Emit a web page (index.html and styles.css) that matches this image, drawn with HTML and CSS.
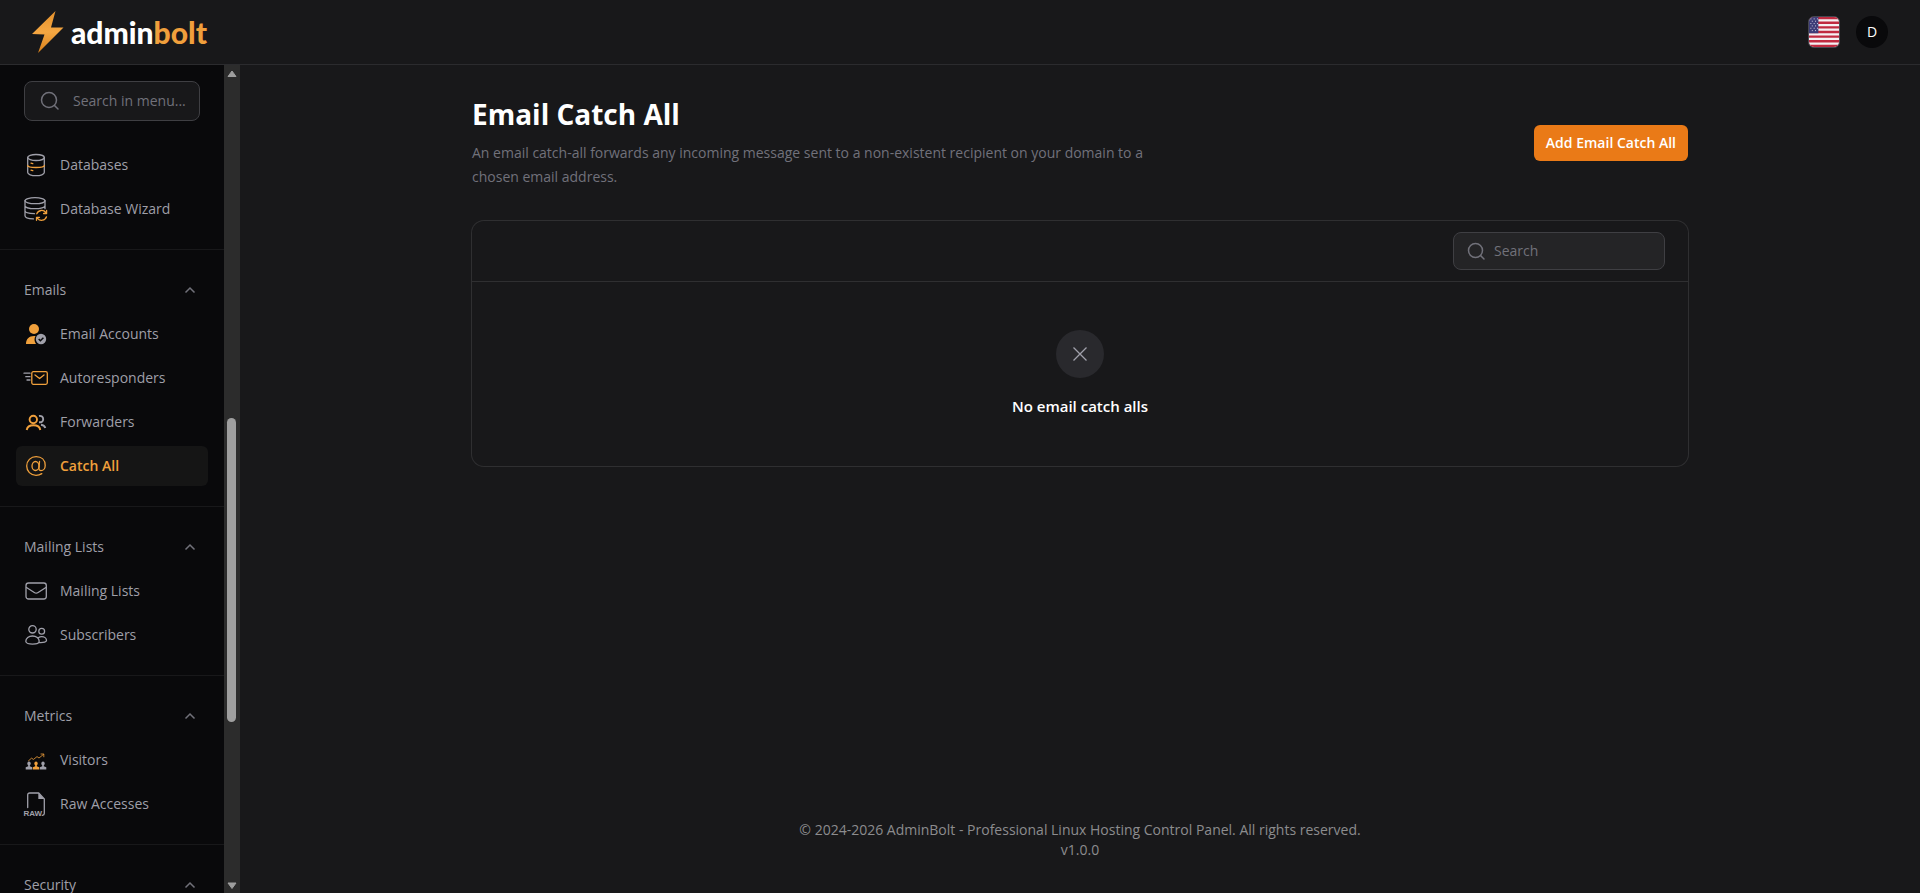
FILE: index.html
```html
<!DOCTYPE html>
<html lang="en">
<head>
<meta charset="utf-8">
<meta name="viewport" content="width=device-width, initial-scale=1">
<title>Email Catch All - AdminBolt</title>
<link rel="stylesheet" href="styles.css">
</head>
<body>
<header class="topbar">
  <a class="brand" href="#" aria-label="adminbolt">
    <svg class="brand-mark" viewBox="0 0 32 42" aria-hidden="true">
      <defs><linearGradient id="bolt" x1="0" y1="0" x2="0" y2="1"><stop offset="0" stop-color="#e5912c"/><stop offset=".5" stop-color="#f5a742"/><stop offset="1" stop-color="#d9801a"/></linearGradient></defs>
      <path fill="url(#bolt)" d="M23.5 0 0 23l12.500.5L6 42l25.500-25.500H19z"/>
    </svg>
    <span class="brand-name">admin<span class="brand-accent">bolt</span></span>
  </a>
  <div class="topbar-actions">
    <button class="flag" type="button" aria-label="Language: English">
      <svg viewBox="0 0 32 32" aria-hidden="true">
        <path fill="#f4f1f3" d="M0 0h32v32H0z"/>
        <path stroke="#c02a40" stroke-width="2.500" d="M0 1.250h32M0 6.150h32M0 11.100h32M0 16h32M0 20.900h32M0 25.850h32M0 30.750h32"/>
        <path fill="#3d3d78" d="M0 0h10v17.200H0z"/>
        <path stroke="#dcdcec" stroke-width="1" stroke-dasharray="1 2.500" d="M1.500 2h8M3 4.500h6M1.500 7h8M3 9.500h6M1.500 12h8M3 14.500h6"/>
      </svg>
    </button>
    <button class="avatar" type="button" aria-label="Account">D</button>
  </div>
</header>

<div class="layout">
  <aside class="sidebar">
    <div class="sidebar-content">
      <label class="menu-search">
        <svg class="icon-search" viewBox="0 0 20 20" aria-hidden="true"><circle cx="9" cy="9" r="7.500"/><path d="m14.500 14.500 3.500 3.500"/></svg>
        <input type="text" placeholder="Search in menu..." aria-label="Search in menu">
      </label>
      <nav class="menu" aria-label="Main">
        <section class="group group-first">
          <a class="item" href="#">
            <svg class="icon" viewBox="0 0 24 24" aria-hidden="true"><g class="line"><ellipse cx="12" cy="4.500" rx="8.300" ry="3"/><path d="M3.700 4.500v15c0 1.800 3.700 3.200 8.300 3.200s8.300-1.400 8.300-3.200v-15"/></g><path class="line accent" d="M3.700 12.500c0 1.100 3.700 2 8.300 2s8.300-.900 8.300-2M7 10.200l1.800.400M7 17.200l1.800.400"/></svg>
            Databases
          </a>
          <a class="item" href="#">
            <svg class="icon" viewBox="0 0 24 24" aria-hidden="true"><g class="line"><ellipse cx="11" cy="3.700" rx="10" ry="3"/><path d="M1 3.700v15c0 1.600 3.500 3 8.500 3.200M21 3.700v8M1 8.700c0 1.700 4.500 3 10 3s10-1.300 10-3M1 13.700c0 1.600 4 2.800 9.500 3"/></g><path class="line accent" d="M12.800 16.800a5.200 5.200 0 0 1 9-1.300m.800-2v3h-3M22.500 19.800a5.200 5.200 0 0 1-9 1.500m-1 2v-3h3"/></svg>
            Database Wizard
          </a>
        </section>

        <section class="group">
          <button class="group-title" type="button" aria-expanded="true">Emails
            <svg class="chevron" viewBox="0 0 20 20" aria-hidden="true"><path d="m5.500 12.500 4.500-4.500 4.500 4.500"/></svg>
          </button>
          <a class="item" href="#">
            <svg class="icon" viewBox="0 0 24 24" aria-hidden="true"><circle class="fill accent" cx="10" cy="7" r="5"/><path class="fill accent" d="M2 22c0-5 3-8 8-8h1.500c-1.500 2.500-1.300 5.500.500 8z"/><circle class="fill" cx="17" cy="17" r="5.200"/><path class="cut" d="m14.700 17 1.700 1.700 3-3"/></svg>
            Email Accounts
          </a>
          <a class="item" href="#">
            <svg class="icon" viewBox="0 0 24 24" aria-hidden="true"><path class="line" d="M0 7.200h6M1.800 10.700H6M3 14h3"/><g class="line accent"><rect x="7.800" y="5.700" width="15.500" height="12.600" rx="1.500"/><path d="m11 9 4.600 3.500L20 9"/></g></svg>
            Autoresponders
          </a>
          <a class="item" href="#">
            <svg class="icon" viewBox="0 0 24 24" aria-hidden="true"><g class="line bold accent"><circle cx="9.300" cy="9.500" r="3.700"/><path d="M2.700 20c.500-3 3.200-4.700 6.800-4.700s6.300 1.700 6.800 4.700"/></g><path class="line bold" d="M15 6c2.500-.500 4.200 1 4.200 3.200S17.500 12.500 15 12.300M17 14.800c2.200.300 3.800 1.400 4.300 3.200"/></svg>
            Forwarders
          </a>
          <a class="item active" href="#" aria-current="page">
            <svg class="icon" viewBox="0 0 24 24" aria-hidden="true"><g class="line accent"><ellipse cx="11.500" cy="12" rx="3.500" ry="4.500"/><path d="M15.500 7.500 15 14c-.200 1.700.500 2.700 2 2.700 2.400 0 4.200-2.300 4.200-5.200C21.200 6 17.500 2.700 12.200 2.700 6.700 2.700 2.700 6.700 2.700 12s4 9.300 9.300 9.300c2.200 0 4.200-.600 5.800-1.700"/></g></svg>
            Catch All
          </a>
        </section>

        <section class="group">
          <button class="group-title" type="button" aria-expanded="true">Mailing Lists
            <svg class="chevron" viewBox="0 0 20 20" aria-hidden="true"><path d="m5.500 12.500 4.500-4.500 4.500 4.500"/></svg>
          </button>
          <a class="item" href="#">
            <svg class="icon" viewBox="0 0 24 24" aria-hidden="true"><g class="line"><rect x="2" y="4" width="20.300" height="16" rx="2.500"/><path d="m2.500 8.500 7.800 5c1.200.800 2.600.800 3.800 0l7.800-5"/></g></svg>
            Mailing Lists
          </a>
          <a class="item" href="#">
            <svg class="icon" viewBox="0 0 24 24" aria-hidden="true"><g class="line"><circle cx="8.500" cy="6.300" r="3.700"/><circle cx="17.700" cy="8.300" r="2.900"/><path d="M8.500 13c3.800 0 6.700 2.200 6.700 5.200 0 1.800-3 2.900-6.700 2.900s-6.700-1.100-6.700-2.900C1.800 15.200 4.700 13 8.500 13ZM14.300 14.700c.900-.600 2.100-1 3.400-1 2.600 0 4.800 1.700 4.800 3.800 0 1.300-2.500 2.200-7 2"/></g></svg>
            Subscribers
          </a>
        </section>

        <section class="group">
          <button class="group-title" type="button" aria-expanded="true">Metrics
            <svg class="chevron" viewBox="0 0 20 20" aria-hidden="true"><path d="m5.500 12.500 4.500-4.500 4.500 4.500"/></svg>
          </button>
          <a class="item" href="#">
            <svg class="icon" viewBox="0 0 24 24" aria-hidden="true"><path class="line thin accent" d="m4.500 12.800 3-2.600 2 1.200 3.500-2.800 2 1.400 4.500-3.600M17 6h2.800v2.800"/><g class="fill"><ellipse cx="5" cy="15.500" rx="1.700" ry="2"/><path d="M4.200 16.500h1.600v1.800l2.400 1v2.200H1.700v-2.200l2.500-1z"/><ellipse cx="19" cy="15.500" rx="1.700" ry="2"/><path d="M18.200 16.500h1.600v1.800l2.500 1v2.200h-6.500v-2.200l2.400-1z"/></g><g class="fill accent"><ellipse cx="12" cy="15.500" rx="1.700" ry="2"/><path d="M11.200 16.500h1.600v1.800l2.400 1v2.200H8.800v-2.200l2.400-1z"/></g></svg>
            Visitors
          </a>
          <a class="item" href="#">
            <svg class="icon" viewBox="0 0 24 24" aria-hidden="true"><path class="line" d="M3.700 15.500V3c0-1.300.800-2 2-2h9L20.300 7v14.500c0 1-.700 1.700-2 1.900"/><path class="fill" d="M14.300 1v6h6z"/><text class="icon-text" x="-.500" y="24">RAW</text></svg>
            Raw Accesses
          </a>
        </section>

        <section class="group">
          <button class="group-title" type="button" aria-expanded="true">Security
            <svg class="chevron" viewBox="0 0 20 20" aria-hidden="true"><path d="m5.500 12.500 4.500-4.500 4.500 4.500"/></svg>
          </button>
        </section>
      </nav>
    </div>
    <div class="scrollbar" aria-hidden="true">
      <svg class="scroll-arrow" viewBox="0 0 10 8"><path d="M5 1 9 6.500H1z"/></svg>
      <div class="scroll-track"><div class="scroll-thumb"></div></div>
      <svg class="scroll-arrow" viewBox="0 0 10 8"><path d="M1 1h8L5 6.500z"/></svg>
    </div>
  </aside>

  <div class="page">
    <main class="content">
      <div class="page-header">
        <div class="page-intro">
          <h1>Email Catch All</h1>
          <p>An email catch-all forwards any incoming message sent to a non-existent recipient on your domain to a chosen email address.</p>
        </div>
        <button class="primary" type="button">Add Email Catch All</button>
      </div>
      <section class="card">
        <div class="card-toolbar">
          <label class="table-search">
            <svg class="icon-search" viewBox="0 0 20 20" aria-hidden="true"><circle cx="9.500" cy="9.500" r="7"/><path d="m14.500 14.500 3.500 3.500"/></svg>
            <input type="text" placeholder="Search" aria-label="Search">
          </label>
        </div>
        <div class="empty">
          <div class="empty-icon"><svg viewBox="0 0 24 24" aria-hidden="true"><path d="m5.500 5.500 13 13m0-13-13 13"/></svg></div>
          <h2>No email catch alls</h2>
        </div>
      </section>
    </main>
    <footer class="footer">
      <p>© 2024-2026 AdminBolt - Professional Linux Hosting Control Panel. All rights reserved.</p>
      <p>v1.0.0</p>
    </footer>
  </div>
</div>
</body>
</html>
```
FILE: styles.css
```css
* { box-sizing: border-box; }

body {
  margin: 0;
  min-height: 100vh;
  display: flex;
  flex-direction: column;
  background: #18181a;
  color: #fff;
  font: 14px/20px "Open Sans", "Noto Sans", sans-serif;
}

h1, h2, p { margin: 0; }
a { color: inherit; text-decoration: none; }
svg { display: block; flex: none; }
button, input { font: inherit; color: inherit; }
button { padding: 0; border: 0; background: none; cursor: pointer; }

.topbar {
  display: flex;
  align-items: center;
  justify-content: space-between;
  height: 65px;
  padding: 0 32px;
  border-bottom: 1px solid #2b2b2e;
}
.brand { display: flex; align-items: center; gap: 7px; }
.brand-mark { width: 32px; height: 42px; }
.brand-name { font: 900 30px/32px Lato, "Open Sans", sans-serif; }
.brand-accent { color: #f09f3c; }
.topbar-actions { display: flex; align-items: center; gap: 16px; }
.flag {
  width: 32px;
  height: 32px;
  overflow: hidden;
  border: 1px solid #47474f;
  border-radius: 6px;
}
.flag svg { width: 100%; height: 100%; }
.avatar {
  width: 32px;
  height: 32px;
  border-radius: 50%;
  background: #09090b;
}

.layout { flex: 1; display: flex; }

.sidebar {
  flex: none;
  display: flex;
  width: 240px;
  height: calc(100vh - 65px);
  overflow: hidden;
  background: #09090b;
  color: #9f9fa8;
  font-weight: 500;
}
.sidebar-content { flex: 1; min-width: 0; padding-top: 16px; }

.menu-search, .table-search {
  display: flex;
  align-items: center;
  border: 1px solid #3f3f43;
  border-radius: 8px;
}
.menu-search {
  height: 40px;
  margin: 0 24px;
  padding: 0 4px 0 15px;
  gap: 13px;
  background: #18181a;
}
.menu-search input, .table-search input {
  flex: 1;
  min-width: 0;
  padding: 0;
  border: 0;
  outline: 0;
  background: none;
}
input::placeholder { color: #71717a; opacity: 1; }
.icon-search {
  width: 20px;
  height: 20px;
  fill: none;
  stroke: #71717a;
  stroke-width: 1.5;
  stroke-linecap: round;
}

.menu { padding-top: 4px; }
.group {
  display: flex;
  flex-direction: column;
  gap: 4px;
  padding: 20px 16px;
  border-top: 1px solid #18181a;
}
.group-first { border-top: 0; }
.group-title {
  display: flex;
  align-items: center;
  justify-content: space-between;
  height: 40px;
  padding: 0 8px;
  font-weight: 500;
}
.chevron {
  width: 20px;
  height: 20px;
  fill: none;
  stroke: #71717a;
  stroke-width: 1.5;
}
.item {
  display: flex;
  align-items: center;
  gap: 12px;
  height: 40px;
  padding: 0 8px;
  border-radius: 6px;
}
.item.active {
  background: #151515;
  color: #f0a03c;
  font-weight: 600;
}

.icon { width: 24px; height: 24px; overflow: visible; color: #a0a0aa; }
.accent { color: #f0a03c; }
.line {
  fill: none;
  stroke: currentColor;
  stroke-width: 1.3;
  stroke-linecap: round;
  stroke-linejoin: round;
}
.bold { stroke-width: 1.9; stroke-linecap: butt; }
.thin { stroke-width: 0.8; }
.fill { fill: currentColor; }
.cut { fill: none; stroke: #09090b; stroke-width: 1.5; }
.icon-text { font: 700 8px/8px "Liberation Sans", sans-serif; fill: currentColor; }

.scrollbar {
  flex: none;
  display: flex;
  flex-direction: column;
  align-items: center;
  width: 16px;
  padding: 5px 1px 3px 0;
  gap: 4px;
  background: #2c2c2c;
}
.scroll-arrow {
  width: 10px;
  height: 8px;
  fill: #9f9f9f;
  stroke: #9f9f9f;
  stroke-linejoin: round;
}
.scroll-track {
  flex: 1;
  display: grid;
  grid-template-rows: 336fr 304fr 156fr;
}
.scroll-thumb {
  grid-row: 2;
  width: 9px;
  border-radius: 5px;
  background: #9f9f9f;
}

.page { flex: 1; min-width: 0; display: flex; flex-direction: column; }
.content {
  flex: 1;
  width: 100%;
  max-width: 1280px;
  margin: 0 auto;
  padding: 32px;
}
.page-header {
  display: flex;
  align-items: center;
  justify-content: space-between;
  gap: 16px;
  padding-bottom: 32px;
}
.page-intro { max-width: 680px; }
.page-intro h1 { font-size: 28px; line-height: 34px; font-weight: 700; }
.page-intro p { margin-top: 10px; line-height: 24px; color: #71717a; }
.primary {
  height: 36px;
  padding: 0 12px;
  border-radius: 6px;
  background: #ea7a17;
  font-weight: 600;
  white-space: nowrap;
}

.card {
  border-radius: 12px;
  box-shadow: 0 0 0 1px #2f2f31;
}
.card-toolbar {
  display: flex;
  justify-content: flex-end;
  padding: 11px 23px;
  border-bottom: 1px solid #2f2f31;
}
.table-search {
  width: 212px;
  height: 38px;
  padding: 0 12px;
  gap: 8px;
  background: #242426;
}
.empty {
  display: flex;
  flex-direction: column;
  align-items: center;
  gap: 16px;
  padding: 48px 24px;
}
.empty-icon {
  display: grid;
  place-items: center;
  width: 48px;
  height: 48px;
  border-radius: 50%;
  background: #29292d;
}
.empty-icon svg {
  width: 24px;
  height: 24px;
  fill: none;
  stroke: #a0a0aa;
  stroke-width: 1.3;
}
.empty h2 { font-size: 15px; line-height: 24px; font-weight: 600; }

.footer {
  padding: 0 32px 33px;
  text-align: center;
  font-weight: 500;
  color: #8c8c8e;
}
```
